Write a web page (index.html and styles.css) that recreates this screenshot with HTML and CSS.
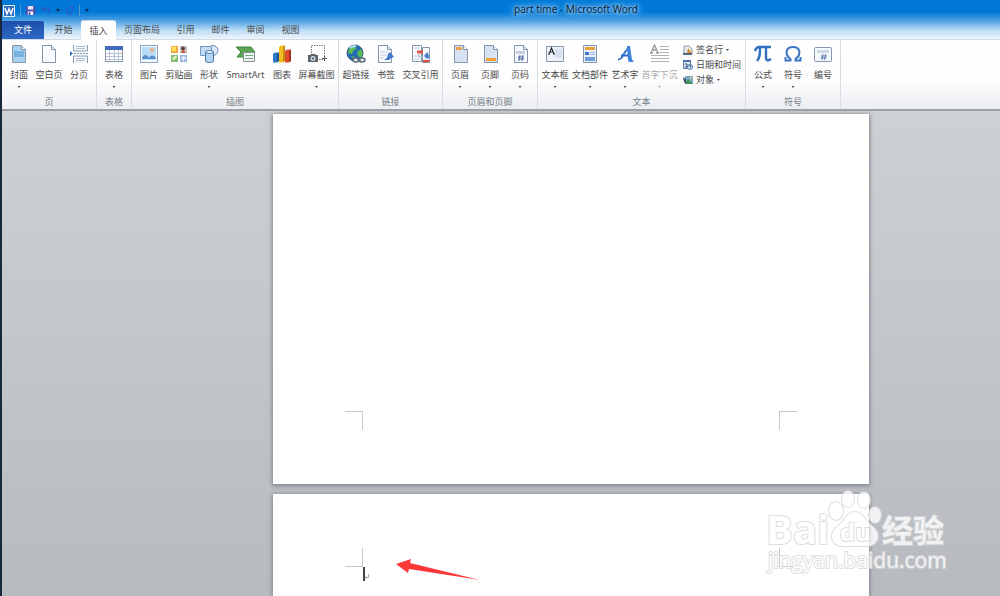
FILE: index.html
```html
<!DOCTYPE html>
<html lang="zh-CN">
<head>
<meta charset="utf-8">
<title>part time - Microsoft Word</title>
<link rel="stylesheet" href="styles.css">
</head>
<body>
<div class="window">
  <header class="chrome">
    <div class="titlebar">
      <div class="quick">
        <svg class="logo" viewBox="0 0 12 12"><rect width="12" height="12" rx="1" fill="#e9f1fb"/><rect x="1" y="1" width="10" height="10" fill="#2f6cc0"/><path d="M2 3l2 6 2-5 2 5 2-6" fill="none" stroke="#fff" stroke-width="1.4"/></svg>
        <i class="rule"></i>
        <button class="q" aria-label="保存"><svg viewBox="0 0 10 10"><path d="M0 0h10v10H0z" fill="#5149a8"/><path d="M2 0h6v4H2z" fill="#dfe6fa"/><path d="M2 6h6v4H2z" fill="#f3f5ff"/><path d="M3 7h2v3H3z" fill="#5149a8"/></svg></button>
        <button class="q" aria-label="撤消"><svg viewBox="0 0 10 10"><path d="M2 4c2-3 6-2 6 1 0 2-1 3-2 4M1 1v4h4" fill="none" stroke="#2f56bd" stroke-width="1.300"/></svg></button>
        <i class="caret"></i>
        <button class="q" aria-label="恢复"><svg viewBox="0 0 10 10"><path d="M3 3C0 6 3 9 5 9s4-3 3-5M5 1h3v3" fill="none" stroke="#3a55c0" stroke-width="1.300"/></svg></button>
        <i class="rule"></i>
        <i class="caret more"></i>
      </div>
      <h1 class="title"><span>part time</span> - <span>Microsoft Word</span></h1>
    </div>
    <nav class="tabs">
      <button class="tab file">文件</button>
      <button class="tab">开始</button>
      <button class="tab active">插入</button>
      <button class="tab">页面布局</button>
      <button class="tab">引用</button>
      <button class="tab">邮件</button>
      <button class="tab">审阅</button>
      <button class="tab">视图</button>
    </nav>
  </header>

  <div class="ribbon">
    <section class="group">
      <div class="tools">
        <button class="tool"><svg viewBox="0 0 20 20"><path d="M3.500 1.500h9l4 4v13h-13z" fill="#a6d2f1" stroke="#8795a8"/><path d="M12.500 1.500v4h4" fill="#eef6fd" stroke="#8795a8"/><path d="M5 8h10M5 10h10M5 12h10" stroke="#4d91c6"/></svg><span>封面</span><i class="caret"></i></button>
        <button class="tool"><svg viewBox="0 0 20 20"><path d="M3.500 1.500h9l4 4v13h-13z" fill="#f8fbff" stroke="#8795a8"/><path d="M12.500 1.500v4h4" fill="#dce8f6" stroke="#8795a8"/></svg><span>空白页</span></button>
        <button class="tool"><svg viewBox="0 0 20 20"><path d="M4.500 1v6h14V1M4.500 19v-7h14v7" fill="#f2f6fb" stroke="#8c9bb0"/><path d="M7 2.500h9M7 4.500h9M7 14.500h9M7 16.500h9" stroke="#b2bfd0"/><path d="M5 9.500h14" stroke="#8093ad" stroke-dasharray="2 1"/><path d="M1 7l3 2.500L1 12z" fill="#356fc0"/></svg><span>分页</span></button>
      </div>
      <h2 class="name">页</h2>
    </section>
    <section class="group">
      <div class="tools">
        <button class="tool"><svg viewBox="0 0 20 20"><path d="M1.500 2.500h17v15h-17z" fill="#fff" stroke="#8795ad"/><path d="M1 2h18v4H1z" fill="#416cbc"/><path d="M2 9.500h16M2 12.500h16M2 15.500h16M5.500 6v11M10.500 6v11M14.500 6v11" stroke="#b7c3d7"/></svg><span>表格</span><i class="caret"></i></button>
      </div>
      <h2 class="name">表格</h2>
    </section>
    <section class="group">
      <div class="tools">
        <button class="tool"><svg viewBox="0 0 20 20"><path d="M1.500 1.500h17v17h-17z" fill="#f5f9fd" stroke="#8ba0bb"/><path d="M3 3h14v13H3z" fill="#b7dcf7"/><circle cx="13" cy="6" r="2" fill="#f0ad84"/><path d="M3 15c1-5 5-5 7-1 2-4 6-3 7 1z" fill="#578fc9"/></svg><span>图片</span></button>
        <button class="tool"><svg viewBox="0 0 20 20"><path d="M2 2h7v7H2z" fill="#eda23b"/><path d="M11 2h7v7h-7z" fill="#c8c0bb"/><path d="M2 11h7v7H2z" fill="#84bb76"/><path d="M11 11h7v7h-7z" fill="#9eb7e2"/><path d="M3 3l4 4M7 3L3 7" stroke="#ffe85e" stroke-width="2"/><circle cx="14" cy="4.500" r="2" fill="#5e4038"/><path d="M12 9l2-3 3 3z" fill="#c84e38"/><path d="M3 16c1-4 3-4 5-4-1 3-2 4-5 4z" fill="#e4f0bb"/><path d="M12 14h5M14.500 12v5" stroke="#eef4ff" stroke-width="1.500"/></svg><span>剪贴画</span></button>
        <button class="tool"><svg viewBox="0 0 20 20"><circle cx="14" cy="6.500" r="5" fill="#d6e8f8" stroke="#668eb9"/><path d="M1.500 2.500h11v9h-11z" fill="#c4dcf2" stroke="#7398c4"/><path d="M6.500 8v9c0 2 8 2 8 0V8z" fill="#b7d4ef" stroke="#4978ad"/><ellipse cx="10.500" cy="8" rx="4" ry="1.500" fill="#eaf5fd" stroke="#4978ad"/></svg><span>形状</span><i class="caret"></i></button>
        <button class="tool smart"><svg viewBox="0 0 20 20"><path d="M0 3h15l4 5-4 5H1l4-5z" fill="#5ba553" stroke="#3c8743"/><path d="M7.500 8.500h11v9h-11z" fill="#f3f6f8" stroke="#84918f"/><path d="M9 11.500h8M9 14.500h8" stroke="#76aa73"/></svg><span>SmartArt</span></button>
        <button class="tool"><svg viewBox="0 0 20 20"><path d="M1 10l2-1.500h4V17l-2 1.500H1z" fill="#2f78c5"/><path d="M7 3l2-1.500h4V17l-2 1.500H7z" fill="#f4bd21"/><path d="M11 3v15l2-1V1.500z" fill="#c68b15"/><path d="M13 7l2-1.500h4V17l-2 1.500h-4z" fill="#dd4b2c"/><path d="M17 7v11l2-1V5.500z" fill="#a22d1c"/><path d="M5 10v8l2-1V8.500z" fill="#1c508d"/></svg><span>图表</span></button>
        <button class="tool four"><svg viewBox="0 0 20 20"><path d="M4.500 9V1.500h13V13M12 15.500h4" fill="none" stroke="#75787d" stroke-dasharray="1.500 1"/><path d="M15 14.500h5M17.500 12v5" stroke="#54575c"/><path d="M1 11h2l1-1h4l1 1h2v7H1z" fill="#5c6269"/><circle cx="6" cy="14.500" r="2.500" fill="#cbd8e5"/><circle cx="6" cy="14.500" r="1" fill="#404953"/></svg><span>屏幕截图</span><i class="caret"></i></button>
      </div>
      <h2 class="name">插图</h2>
    </section>
    <section class="group">
      <div class="tools">
        <button class="tool"><svg viewBox="0 0 20 20"><circle cx="9" cy="9" r="8" fill="#246bb7" stroke="#3d638b"/><path d="M3 5c2-3 4-3 6-3l1 3-3 2-1 3-4-1zM11 8l4-3c2 3 2 6 0 9l-3-2zM5 12l4 1v3z" fill="#5abb51"/><path d="M4 4c2-2 4-2 6-2" stroke="#b7e5fb" stroke-width="2" fill="none"/><ellipse cx="10" cy="16" rx="3" ry="2" fill="#e2e9ef" stroke="#596879" stroke-width="1.500"/><ellipse cx="16" cy="16" rx="3" ry="2" fill="#e2e9ef" stroke="#596879" stroke-width="1.500"/><path d="M11 16h4" stroke="#596879"/></svg><span>超链接</span></button>
        <button class="tool"><svg viewBox="0 0 20 20"><path d="M2.500 1.500h9l4 4v13h-13z" fill="#fafcff" stroke="#8795a8"/><path d="M11.500 1.500v4h4" fill="#dce8f6" stroke="#8795a8"/><path d="M4 8h8M4 11h7M4 14h4" stroke="#c0cbdd"/><path d="M8 16l3-2 1-4 2-2 4 5-3 1-2 2z" fill="#3f78cc"/></svg><span>书签</span></button>
        <button class="tool four"><svg viewBox="0 0 20 20"><path d="M1.500 1.500h9v16h-9z" fill="#f8faff" stroke="#8795a8"/><path d="M3 4h6M3 12h6M3 15h6" stroke="#becadc"/><path d="M11.500 3.500h7v15h-7z" fill="#f5f8fd" stroke="#8795a8"/><path d="M6 6.500h6v3H6z" fill="#df4d38"/><path d="M12 16h6v2h-6z" fill="#e24c38"/><path d="M13 12l3-4 3 5-3 2z" fill="#4d83cd"/><path d="M8 8v5h4" fill="none" stroke="#b4bfd1"/></svg><span>交叉引用</span></button>
      </div>
      <h2 class="name">链接</h2>
    </section>
    <section class="group">
      <div class="tools">
        <button class="tool"><svg viewBox="0 0 20 20"><path d="M4.500 1.500h9l4 4v13h-13z" fill="#d6e2f4" stroke="#8795a8"/><path d="M13.500 1.500v4h4" fill="#f4f8fd" stroke="#8795a8"/><path d="M6 3h6v3H6z" fill="#eda04c"/></svg><span>页眉</span><i class="caret"></i></button>
        <button class="tool"><svg viewBox="0 0 20 20"><path d="M4.500 1.500h9l4 4v13h-13z" fill="#d6e2f4" stroke="#8795a8"/><path d="M13.500 1.500v4h4" fill="#f4f8fd" stroke="#8795a8"/><path d="M6 14h10v3H6z" fill="#f0a039"/></svg><span>页脚</span><i class="caret"></i></button>
        <button class="tool"><svg viewBox="0 0 20 20"><path d="M4.500 1.500h9l4 4v13h-13z" fill="#f6f9fd" stroke="#8795a8"/><path d="M13.500 1.500v4h4" fill="#dce8f6" stroke="#8795a8"/><path d="M6 7h9v3H6z" fill="#c5d0e2"/><path d="M10 11l-1 6M13 11l-1 6M8 13h6M8 15h6" stroke="#546da3"/></svg><span>页码</span><i class="caret"></i></button>
      </div>
      <h2 class="name">页眉和页脚</h2>
    </section>
    <section class="group">
      <div class="tools">
        <button class="tool"><svg viewBox="0 0 20 20"><path d="M1.500 2.500h17v15h-17z" fill="#eef3fa" stroke="#8997ac"/><path d="M10 5h7v9h-7z" fill="#d7e1f1"/><path d="M4 10l2.500-6L9 10M3 10h2M8 10h2M5 8h3" fill="none" stroke="#252d3b" stroke-width="1.200"/></svg><span>文本框</span><i class="caret"></i></button>
        <button class="tool parts"><svg viewBox="0 0 20 20"><path d="M3.500 1.500h13v17h-13z" fill="#e7effa" stroke="#8795a8"/><path d="M5 3h10v3H5z" fill="#f0a039"/><path d="M5 8h4v3H5z" fill="#3f78cb"/><path d="M5 13h10v4H5z" fill="#6f9cdb"/><path d="M10 8.500h5M10 10.500h5" stroke="#a5b9d7"/></svg><span>文档部件</span><i class="caret"></i></button>
        <button class="tool"><svg viewBox="0 0 20 20"><path d="M3 15.500c3 0 4-2 6-6L14 3M6 11.500h9" fill="none" stroke="#2d6fc8" stroke-width="1.800"/><path d="M12 2h3l2 14 2 1-1 1h-4l-1-2z" fill="#3d83db"/></svg><span>艺术字</span><i class="caret"></i></button>
        <button class="tool four" disabled><svg viewBox="0 0 20 20"><path d="M1 9l3.500-8L8 9M0 9h3M6 9h3M3 6h4" fill="none" stroke="#999" stroke-width="1.300"/><path d="M10 2.500h9M10 5.500h9M10 8.500h9M1 11.500h18M1 14.500h18M1 17.500h18" stroke="#b2b2b2"/></svg><span>首字下沉</span><i class="caret"></i></button>
        <div class="stack">
          <button class="mini"><svg viewBox="0 0 10 10"><path d="M1 1h5l3 3v5H1z" fill="#e9edf2" stroke="#8b98a8"/><path d="M0 8h9v2H0z" fill="#536b83"/><path d="M5 3l4 5H4z" fill="#da8e30"/></svg><span>签名行</span><i class="caret"></i></button>
          <button class="mini"><svg viewBox="0 0 10 10"><path d="M.500.500h7v8h-7z" fill="#dfe9f8" stroke="#5877aa"/><path d="M0 0h8v2H0z" fill="#4971b1"/><path d="M2 4h2v3H2" fill="none" stroke="#304b77"/><circle cx="7" cy="7" r="2.500" fill="#d8e7f9" stroke="#4e77af"/><path d="M7 5v2h1" stroke="#345" fill="none"/></svg><span>日期和时间</span></button>
          <button class="mini"><svg viewBox="0 0 10 10"><path d="M2 1h8v8H2z" fill="#79a9c9"/><path d="M2 9l3-5 5 5z" fill="#3f8e51"/><path d="M0 2l3 2v5L1 7z" fill="#425268"/><circle cx="8" cy="3" r="1" fill="#f4d578"/></svg><span>对象</span><i class="caret"></i></button>
        </div>
      </div>
      <h2 class="name">文本</h2>
    </section>
    <section class="group">
      <div class="tools">
        <button class="tool"><svg viewBox="0 0 20 20"><path d="M2 7c1-3 2-4 4-4h12M7 4c0 6 0 10-3 13M13 4v9c0 4 2 4 5 2" fill="none" stroke="#3370c0" stroke-width="2.400"/></svg><span>公式</span><i class="caret"></i></button>
        <button class="tool"><svg viewBox="0 0 20 20"><path d="M2.500 13v3.500h5V15C1 10 3 3 10 3s9 7 2.500 12v1.500h5V13" fill="none" stroke="#3975c3" stroke-width="2"/></svg><span>符号</span><i class="caret"></i></button>
        <button class="tool"><svg viewBox="0 0 20 20"><rect x="1.500" y="3.500" width="17" height="14" rx="1" fill="#f5f8fd" stroke="#8896ad"/><path d="M4 6h12v3H4z" fill="#ced7e6"/><path d="M10 10l-1 6M12.500 10l-1 6M8 12h6M7.500 14h6" stroke="#4f6ba5" stroke-width=".8"/></svg><span>编号</span></button>
      </div>
      <h2 class="name">符号</h2>
    </section>
  </div>

  <main class="document">
    <article class="page first">
      <i class="mark bottom-left"></i>
      <i class="mark bottom-right"></i>
    </article>
    <article class="page second">
      <i class="mark top-left"></i>
      <i class="mark top-right"></i>
      <p class="cursor"><svg viewBox="0 0 5 6"><path d="M3.500 0v3.500H0M1.500 2L0 3.500 1.500 5" fill="none" stroke="#999" stroke-width=".8"/></svg></p>
      <svg class="arrow" viewBox="0 0 84 26"><path d="M0 6L15 1l-1 4 70 17L13 11l-1 4z" fill="#fb3838"/></svg>
    </article>
    <svg class="watermark" viewBox="0 0 190 96">
      <g class="ink">
        <ellipse cx="76" cy="25" rx="7" ry="9"/>
        <ellipse cx="88" cy="13" rx="6" ry="8"/>
        <ellipse cx="104" cy="14" rx="6" ry="8"/>
        <ellipse cx="115" cy="29" rx="6" ry="8"/>
        <path d="M95 26c-6 0-9 5-12 9-4 5-11 8-11 15 0 6 4 10 10 10h25c6 0 11-4 11-10 0-7-7-10-11-15-3-4-6-9-12-9z"/>
        <text class="brand" x="6" y="58">Bai</text>
        <text class="han" x="122" y="56">经验</text>
        <text class="site" x="8" y="82">jingyan.baidu.com</text>
        <text class="du" x="80" y="55">du</text>
      </g>
    </svg>
  </main>
</div>
</body>
</html>
```
FILE: styles.css
```css
* { box-sizing: border-box; }

body {
  margin: 0;
  font-family: "Noto Sans", "Noto Sans CJK SC", sans-serif;
  font-size: 9px;
  line-height: 12px;
  color: #4a4a4a;
}

button {
  margin: 0;
  padding: 0;
  border: 0;
  background: none;
  font: inherit;
  color: inherit;
  white-space: nowrap;
}

h1, h2, p { margin: 0; font-size: inherit; font-weight: normal; }
svg { display: block; flex: none; }

.window {
  display: flex;
  flex-direction: column;
  height: 100vh;
  overflow: hidden;
  border-left: 2px solid #17283d;
}

.chrome {
  background: linear-gradient(#0078d7 0, #0078d7 12px, #5aa8e6 22px, #b9dbf5 30px, #eaf3fb 38px);
  border-bottom: 1px solid #d3dae2;
}

.titlebar { display: flex; height: 21px; }
.quick { display: flex; align-items: center; gap: 5px; width: 150px; padding-left: 1px; }
.logo { width: 12px; height: 12px; }
.q { width: 9px; height: 9px; }
.q svg { width: 9px; height: 9px; }
.q + .q { margin-left: 2px; }
.rule { flex: none; width: 1px; height: 11px; background: #5b97cc; }
.caret {
  flex: none;
  width: 3px;
  height: 2px;
  background: currentColor;
  clip-path: polygon(0 0, 100% 0, 50% 100%);
}
.quick .caret { width: 4px; height: 3px; color: #10294a; }
.title {
  flex: 1;
  color: #0b2238;
  font-size: 10px;
  line-height: 19px;
  text-align: center;
  white-space: pre;
}
.title span { text-shadow: 0 0 3px #8cc7f4, 0 0 5px #8cc7f4, 0 0 7px #8cc7f4, 0 0 9px #8cc7f4; }

.tabs { display: flex; height: 18px; }
.tab { min-width: 35px; padding: 0 8px; line-height: 18px; }
.tab.file {
  width: 42px;
  margin-right: 2px;
  color: #fff;
  background: linear-gradient(#1d4fa9, #2d68c4);
  border-radius: 0 2px 0 0;
}
.tab.active {
  margin-bottom: -1px;
  background: #fff;
  border-radius: 2px 2px 0 0;
  box-shadow: 0 -1px 0 #c3d3e4;
}

.ribbon {
  display: flex;
  flex: none;
  background: linear-gradient(#fff 0, #fdfdfe 40px, #eceef1 70px);
  border-bottom: 2px solid #9ca1a9;
}
.group {
  display: flex;
  flex-direction: column;
  padding: 4px 2px 1px;
  border-right: 1px solid #d9dce1;
}
.tools { display: flex; flex: 1; }
.tool {
  display: flex;
  flex-direction: column;
  align-items: center;
  justify-content: flex-start;
  width: 30px;
  height: 52px;
}
.tool > svg { width: 20px; height: 20px; margin-bottom: 5px; }
.tool > .caret { margin-top: 5px; }
.tool.four { width: 39px; }
.tool.parts { width: 40px; }
.tool.smart { width: 43px; }
.tool:disabled, .tool:disabled .caret { color: #aaa; }
.stack { display: flex; flex-direction: column; gap: 3px; padding: 0 2px 0 4px; }
.mini { display: flex; align-items: center; gap: 3px; height: 12px; }
.mini > svg { width: 10px; height: 10px; }
.name { color: #747b85; text-align: center; }

.document {
  position: relative;
  flex: 1;
  min-height: 0;
  display: flex;
  flex-direction: column;
  gap: 10px;
  padding: 3px 131px 0 27.2%;
  background: linear-gradient(#cdd0d4, #b7bbc0);
  overflow: hidden;
}
.page {
  position: relative;
  display: flex;
  flex: none;
  justify-content: space-between;
  height: 370px;
  padding: 54px 72px;
  background: #fff;
  box-shadow: 0 1px 4px 1px #82878d;
}
.first { align-items: flex-end; }
.second { align-items: flex-start; }
.mark { width: 18px; height: 19px; border: 0 solid #c9c9c9; }
.bottom-left { border-width: 1px 1px 0 0; }
.bottom-right { border-width: 1px 0 0 1px; }
.top-left { border-width: 0 1px 1px 0; }
.top-right { border-width: 0 0 1px 1px; }
.cursor {
  position: absolute;
  left: 90px;
  top: 73px;
  height: 14px;
  border-left: 2px solid #444;
  padding: 7px 0 0;
}
.cursor svg { width: 5px; height: 6px; }
.arrow { position: absolute; left: 123px; top: 64px; width: 84px; height: 26px; }

.watermark { position: absolute; right: 50px; top: 375px; width: 190px; height: 96px; }
.ink { fill: #fff; stroke: #d6d6d6; stroke-width: 2px; opacity: .8; paint-order: stroke; }
.brand { font: bold 40px "Open Sans", sans-serif; }
.han { font: bold 31px "Noto Sans CJK SC", sans-serif; }
.site { font: 21px "Open Sans", sans-serif; }
.du { font: bold 24px "Open Sans", sans-serif; }
```
